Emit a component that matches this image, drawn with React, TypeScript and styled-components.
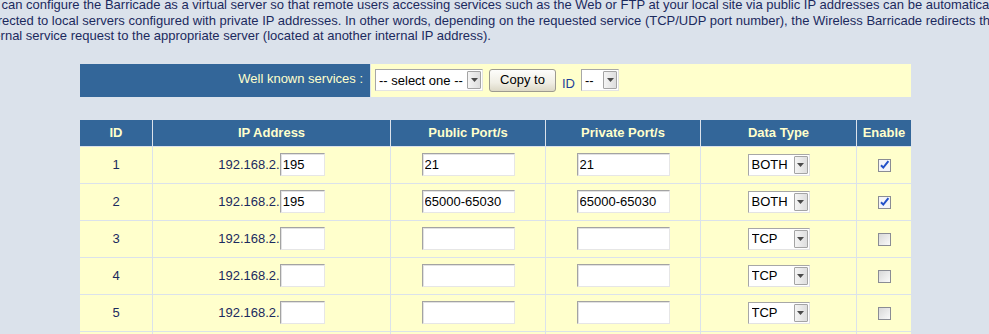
import React from 'react';
import styled, { createGlobalStyle } from 'styled-components';

const Colors = {
  page: '#dbe2eb',
  text: '#1b2a5e',
  head: '#336699',
  headText: '#ffffcc',
  row: '#ffffcc',
  link: '#1f3f9a',
};

const GlobalStyle = createGlobalStyle`
  html, body {
    margin: 0;
    padding: 0;
    background: ${Colors.page};
  }
  body {
    font-family: 'Liberation Sans', Arial, sans-serif;
    font-size: 13px;
    color: ${Colors.text};
    overflow: hidden;
  }
`;

type Row = {
  id: number;
  ip: string;
  pub: string;
  priv: string;
  type: string;
  on: boolean;
};

const rows: Row[] = [
  { id: 1, ip: '195', pub: '21', priv: '21', type: 'BOTH', on: true },
  { id: 2, ip: '195', pub: '65000-65030', priv: '65000-65030', type: 'BOTH', on: true },
  { id: 3, ip: '', pub: '', priv: '', type: 'TCP', on: false },
  { id: 4, ip: '', pub: '', priv: '', type: 'TCP', on: false },
  { id: 5, ip: '', pub: '', priv: '', type: 'TCP', on: false },
  { id: 6, ip: '', pub: '', priv: '', type: 'TCP', on: false },
];

const DropDown = ({ width, value, options }: { width: number; value: string; options: string[] }) => (
  <SelectBox width={width}>
    <select defaultValue={value}>
      {options.map(o => (
        <option key={o}>{o}</option>
      ))}
    </select>
    <ArrowButton>
      <svg width="7" height="4" viewBox="0 0 7 4">
        <path d="M0 0h7L3.5 4z" fill="#4a4a4a" />
      </svg>
    </ArrowButton>
  </SelectBox>
);

const CheckMark = ({ checked }: { checked: boolean }) => (
  <Check checked={checked}>
    {checked && (
      <svg width="11" height="11" viewBox="0 0 11 11">
        <path d="M2 5.2l2.3 2.4L9.4 1.2" stroke="#2250c8" strokeWidth="2" fill="none" />
      </svg>
    )}
  </Check>
);

const App = () => (
  <Page>
    <GlobalStyle />
    <Intro>
      You can configure the Barricade as a virtual server so that remote users accessing services such as the Web or
      FTP at your local site via public IP addresses can be automatically
      <br />
      redirected to local servers configured with private IP addresses. In other words, depending on the requested
      service (TCP/UDP port number), the Wireless Barricade redirects the
      <br />
      external service request to the appropriate server (located at another internal IP address).
    </Intro>
    <Panel>
      <Grid>
        <tbody>
          <tr>
            <LabelCell>Well known services :</LabelCell>
            <ToolCell>
              <Tools>
                <DropDown width={108} value="-- select one --" options={['-- select one --', 'FTP', 'HTTP', 'SMTP']} />
                <Button type="button">Copy to</Button>
                <IdLabel>ID</IdLabel>
                <DropDown width={38} value="--" options={['--', '1', '2', '3', '4', '5']} />
              </Tools>
            </ToolCell>
          </tr>
        </tbody>
      </Grid>

      <Grid className="servers">
        <colgroup>
          <col style={{ width: 72 }} />
          <col style={{ width: 237 }} />
          <col style={{ width: 154 }} />
          <col style={{ width: 154 }} />
          <col style={{ width: 155 }} />
          <col style={{ width: 54 }} />
        </colgroup>
        <thead>
          <tr>
            <Head>ID</Head>
            <Head>IP Address</Head>
            <Head>Public Port/s</Head>
            <Head>Private Port/s</Head>
            <Head>Data Type</Head>
            <Head>Enable</Head>
          </tr>
        </thead>
        <tbody>
          {rows.map(r => (
            <tr key={r.id}>
              <Cell>{r.id}</Cell>
              <Cell>
                192.168.2.
                <TextBox width={45} defaultValue={r.ip} />
              </Cell>
              <Cell>
                <TextBox width={93} defaultValue={r.pub} />
              </Cell>
              <Cell>
                <TextBox width={93} defaultValue={r.priv} />
              </Cell>
              <Cell>
                <DropDown width={62} value={r.type} options={['TCP', 'UDP', 'BOTH']} />
              </Cell>
              <Cell>
                <CheckMark checked={r.on} />
              </Cell>
            </tr>
          ))}
        </tbody>
      </Grid>
    </Panel>
  </Page>
);

const Page = styled.div`
  width: 989px;
  height: 334px;
  overflow: hidden;
`;

const Intro = styled.p`
  margin: -3px 0 0 -24px;
  line-height: 15.5px;
  white-space: nowrap;
`;

const Panel = styled.div`
  display: flex;
  flex-direction: column;
  gap: 21px;
  margin-top: 19px;
  padding-left: 79px;
`;

const Grid = styled.table`
  width: 833px;
  border-collapse: separate;
  border-spacing: 1px;
  table-layout: fixed;
  &.servers td {
    height: 36px;
  }
`;

const LabelCell = styled.td`
  width: 290px;
  height: 33px;
  box-sizing: border-box;
  padding: 0 7px 3px 0;
  background: ${Colors.head};
  color: ${Colors.headText};
  text-align: right;
  vertical-align: middle;
`;

const ToolCell = styled.td`
  background: ${Colors.row};
  padding: 0 0 0 4px;
  vertical-align: middle;
`;

const Tools = styled.div`
  display: flex;
  align-items: center;
  gap: 6px;
`;

const IdLabel = styled.span`
  color: ${Colors.link};
  margin-top: 6px;
`;

const Button = styled.button`
  width: 67px;
  height: 23px;
  padding: 0 0 2px;
  border: 1px solid #9c9a90;
  border-radius: 3px;
  background: linear-gradient(#fdfdfb, #f0eee4 60%, #dcd8c6);
  font-family: 'Liberation Sans', Arial, sans-serif;
  font-size: 13px;
  color: #000;
`;

const Head = styled.th`
  height: 26px;
  padding: 0;
  background: ${Colors.head};
  color: ${Colors.headText};
  font-weight: bold;
  font-size: 13px;
  text-align: center;
  vertical-align: middle;
`;

const Cell = styled.td`
  padding: 0;
  background: ${Colors.row};
  text-align: center;
  vertical-align: middle;
  color: ${Colors.text};
`;

const TextBox = styled.input<{ width: number }>`
  box-sizing: border-box;
  width: ${({ width }) => width}px;
  height: 23px;
  margin: 0;
  padding: 0 2px;
  border: 1px solid;
  border-color: #a3a3a3 #e6e6e6 #e6e6e6 #a3a3a3;
  box-shadow: inset 1px 1px 0 #e2e2e2;
  background: #fff;
  font-family: 'Liberation Sans', Arial, sans-serif;
  font-size: 13px;
  color: #000;
  vertical-align: baseline;
  outline: none;
`;

const SelectBox = styled.span<{ width: number }>`
  box-sizing: border-box;
  display: inline-flex;
  align-items: stretch;
  width: ${({ width }) => width}px;
  height: 22px;
  padding: 1px;
  border: 1px solid;
  border-color: #a7a7a7 #e3e3e3 #e3e3e3 #a7a7a7;
  background: #fff;
  vertical-align: middle;
  > select {
    flex: 1;
    min-width: 0;
    appearance: none;
    border: none;
    outline: none;
    background: transparent;
    padding: 0 0 0 2px;
    font-family: 'Liberation Sans', Arial, sans-serif;
    font-size: 13px;
    color: #000;
  }
`;

const ArrowButton = styled.span`
  box-sizing: border-box;
  width: 14px;
  display: flex;
  align-items: center;
  justify-content: center;
  border: 1px solid #a4a4a4;
  border-radius: 1px;
  background: linear-gradient(90deg, #f4f4f4, #dedede);
`;

const Check = styled.span<{ checked: boolean }>`
  box-sizing: border-box;
  display: inline-flex;
  align-items: center;
  justify-content: center;
  width: 13px;
  height: 13px;
  border: 1px solid #8a8c94;
  background: ${({ checked }) => (checked ? '#f4f4f8' : 'linear-gradient(135deg, #d8d8d8, #fafafa)')};
  vertical-align: middle;
`;

export default App;
